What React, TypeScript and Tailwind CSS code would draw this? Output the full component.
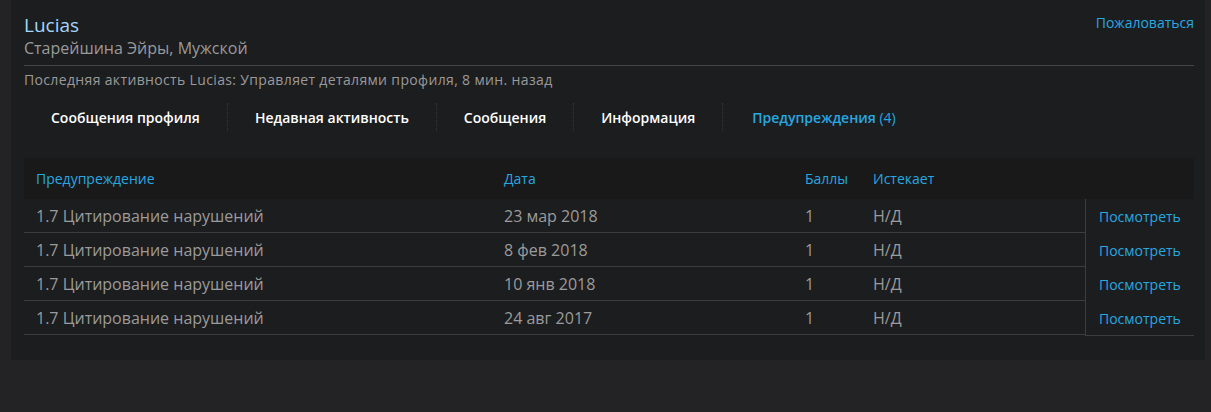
import React from 'react'

const rows = [
  { reason: '1.7 Цитирование нарушений', date: '23 мар 2018', points: '1', expires: 'Н/Д' },
  { reason: '1.7 Цитирование нарушений', date: '8 фев 2018', points: '1', expires: 'Н/Д' },
  { reason: '1.7 Цитирование нарушений', date: '10 янв 2018', points: '1', expires: 'Н/Д' },
  { reason: '1.7 Цитирование нарушений', date: '24 авг 2017', points: '1', expires: 'Н/Д' },
]

const tabs = ['Сообщения профиля', 'Недавная активность', 'Сообщения', 'Информация']

export default function App() {
  return (
    <div
      className="min-h-[412px] w-full bg-[#232325] pl-[11px] pr-[6px]"
      style={{ fontFamily: '"Open Sans", "Noto Sans", sans-serif' }}
    >
      <div className="bg-[#1c1d1f] pl-[13px] pr-[11px] pt-[13px] pb-[24px]">
        {/* Шапка профиля */}
        <div className="flex justify-between items-start">
          <div>
            <h1 className="text-[19px] leading-[24px] text-[#a3d6fa]">Lucias</h1>
            <p className="text-[16px] leading-[22px] text-[#9a9a9a]">Старейшина Эйры, Мужской</p>
          </div>
          <a className="text-[14px] leading-[18px] text-[#27a8e0] mt-[1px]">Пожаловаться</a>
        </div>
        <div className="h-px bg-[#454547] mt-[6px]" />
        <p className="text-[14px] leading-[18px] tracking-[0.35px] text-[#9a9a9a] mt-[5px]">
          Последняя активность Lucias: Управляет деталями профиля, 8 мин. назад
        </p>

        {/* Вкладки */}
        <div className="flex items-center mt-[14px] h-[28px]">
          {tabs.map((t) => (
            <React.Fragment key={t}>
              <span className="px-[27px] text-[14px] font-semibold text-white whitespace-nowrap">{t}</span>
              <span className="h-[28px] border-l border-dotted border-[#36363a]" />
            </React.Fragment>
          ))}
          <span className="px-[29px] text-[14px] font-semibold text-[#27a8e0] whitespace-nowrap">
            Предупреждения <span className="font-normal">(4)</span>
          </span>
        </div>

        {/* Таблица предупреждений */}
        <div className="mt-[27px]">
          <div className="grid grid-cols-[468px_301px_68px_1fr] h-[41px] items-center bg-[#19191a] text-[14px] text-[#27a8e0]">
            <span className="pl-[12px]">Предупреждение</span>
            <span className="pl-[12px]">Дата</span>
            <span className="pl-[12px]">Баллы</span>
            <span className="pl-[12px]">Истекает</span>
          </div>
          <div className="flex">
            <div className="flex-1">
              {rows.map((r, i) => (
                <div
                  key={i}
                  className="grid grid-cols-[468px_301px_68px_1fr] h-[34px] items-center border-b border-[#3d3d3f] text-[16px] text-[#9b9b9b]"
                >
                  <span className="pl-[12px]">{r.reason}</span>
                  <span className="pl-[12px]">{r.date}</span>
                  <span className="pl-[12px]">{r.points}</span>
                  <span className="pl-[12px]">{r.expires}</span>
                </div>
              ))}
            </div>
            <div className="w-[109px] border-l border-b border-[#3d3d3f]">
              {rows.map((_, i) => (
                <div key={i} className="h-[34px] flex items-center pl-[13px] text-[14px] text-[#27a8e0]">
                  Посмотреть
                </div>
              ))}
            </div>
          </div>
        </div>
      </div>
    </div>
  )
}
